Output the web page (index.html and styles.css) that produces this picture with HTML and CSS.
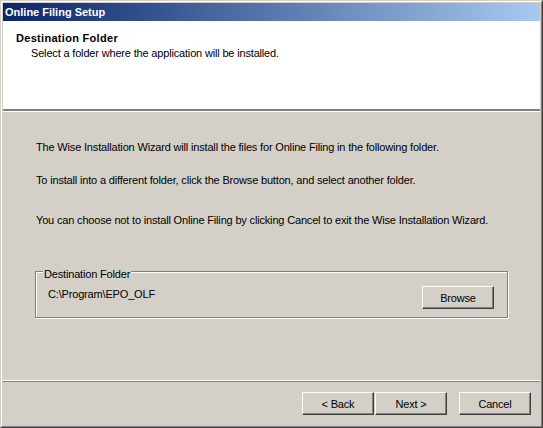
FILE: index.html
```html
<!DOCTYPE html>
<html lang="en">
<head>
  <meta charset="UTF-8">
  <meta name="viewport" content="width=device-width, initial-scale=1.0">
  <link rel="stylesheet" href="styles.css">
</head>
<body>
<div class="window">
  <div class="frame">
    <div class="title-bar">Online Filing Setup</div>

    <div class="header">
      <div class="header-title">Destination Folder</div>
      <div class="header-sub">Select a folder where the application will be installed.</div>
    </div>

    <div class="content">
      <p class="line first">The Wise Installation Wizard will install the files for Online Filing in the following folder.</p>
      <p class="line second">To install into a different folder, click the Browse button, and select another folder.</p>
      <p class="line third">You can choose not to install Online Filing by clicking Cancel to exit the Wise Installation Wizard.</p>

      <div class="group">
        <span class="group-label">Destination Folder</span>
        <div class="group-row">
          <span class="path">C:\Program\EPO_OLF</span>
          <button type="button" class="btn">Browse</button>
        </div>
      </div>
    </div>

    <div class="footer">
      <button type="button" class="btn">&lt; Back</button>
      <button type="button" class="btn next">Next &gt;</button>
      <button type="button" class="btn">Cancel</button>
    </div>
  </div>
</div>
</body>
</html>
```

FILE: styles.css
```css
body {
  margin: 0;
  padding: 0;
  font-family: "Liberation Sans", Arial, sans-serif;
  font-size: 11px;
  line-height: 13px;
  letter-spacing: -0.17px;
  color: #000;
  background-color: #d4d0c8;
}
.window {
  width: 543px;
  height: 428px;
  box-sizing: border-box;
  border: 1px solid;
  border-color: #d4d0c8 #404040 #404040 #d4d0c8;
}
.frame {
  height: 100%;
  box-sizing: border-box;
  border: 1px solid;
  border-color: #fff #808080 #808080 #fff;
  padding: 1px;
  background-color: #d4d0c8;
  display: flex;
  flex-direction: column;
}
.title-bar {
  height: 18px;
  box-sizing: border-box;
  padding: 3px 0 0 2px;
  font-weight: bold;
  letter-spacing: 0;
  color: #fff;
  background: linear-gradient(to right, #0a246a, #a6caf0);
}
.header {
  height: 91px;
  box-sizing: border-box;
  padding: 11px 0 0 13px;
  background-color: #fff;
  border-bottom: 1px solid #fff;
  box-shadow: inset 0 -2px 0 #808080;
}
.header-title {
  font-weight: bold;
  letter-spacing: 0.3px;
}
.header-sub {
  margin-top: 2px;
  padding-left: 15px;
}
.content {
  flex: 1;
  padding: 29px 32px 0 33px;
  border-bottom: 1px solid #fff;
  box-shadow: 0 1px 0 #808080;
  margin-bottom: 1px;
}
.line {
  margin: 0;
}
.second {
  margin-top: 20px;
}
.third {
  margin-top: 27px;
}
.group {
  position: relative;
  margin: 44px 0 0 -1px;
  height: 47px;
  box-sizing: border-box;
  border: 1px solid #808080;
  box-shadow: 1px 1px 0 #fff, inset 1px 1px 0 #fff;
  padding: 14px 13px 0 12px;
}
.group-label {
  position: absolute;
  top: -4px;
  left: 7px;
  padding: 0 1px;
  background-color: #d4d0c8;
}
.group-row {
  display: flex;
  justify-content: space-between;
  align-items: flex-start;
}
.path {
  margin-top: 2px;
}
.btn {
  width: 72px;
  height: 23px;
  padding: 0;
  font-family: "Liberation Sans", Arial, sans-serif;
  font-size: 11px;
  letter-spacing: -0.17px;
  color: #000;
  background-color: #d4d0c8;
  border: 1px solid;
  border-color: #fff #404040 #404040 #fff;
  box-shadow: inset -1px -1px 0 #808080, inset 1px 1px 0 #d4d0c8;
  border-radius: 0;
}
.footer {
  height: 43px;
  box-sizing: border-box;
  padding: 10px 9px 0 0;
  display: flex;
  justify-content: flex-end;
}
.next {
  margin: 0 12px 0 1px;
}
```
